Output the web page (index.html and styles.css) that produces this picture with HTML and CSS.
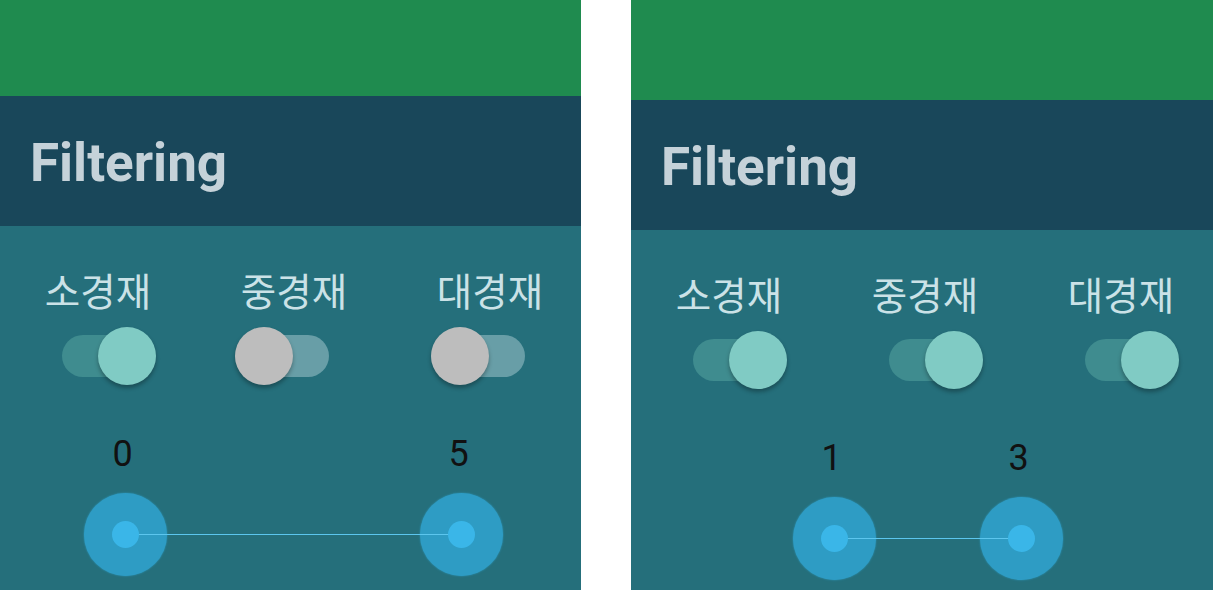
FILE: index.html
```html
<!DOCTYPE html>
<html lang="ko">
<head>
<meta charset="utf-8">
<title>Filtering</title>
<link rel="stylesheet" href="styles.css">
</head>
<body>
<div class="page">
  <section class="panel panel-a">
    <div class="appbar"></div>
    <header class="titlebar"><h1 class="title">Filtering</h1></header>
    <div class="content">
      <div class="toggles">
        <div class="col">
          <span class="label">소경재</span>
          <span class="switch on"><span class="track"></span><span class="thumb"></span></span>
        </div>
        <div class="col">
          <span class="label">중경재</span>
          <span class="switch off"><span class="track"></span><span class="thumb"></span></span>
        </div>
        <div class="col">
          <span class="label">대경재</span>
          <span class="switch off"><span class="track"></span><span class="thumb"></span></span>
        </div>
      </div>
      <div class="range">
        <div class="range-line" style="left:125px; width:336px;"></div>
        <div class="knob" style="left:125px;"><span class="value">0</span><span class="handle"><span class="dot"></span></span></div>
        <div class="knob" style="left:461px;"><span class="value">5</span><span class="handle"><span class="dot"></span></span></div>
      </div>
    </div>
  </section>
  <section class="panel panel-b">
    <div class="appbar"></div>
    <header class="titlebar"><h1 class="title">Filtering</h1></header>
    <div class="content">
      <div class="toggles">
        <div class="col">
          <span class="label">소경재</span>
          <span class="switch on"><span class="track"></span><span class="thumb"></span></span>
        </div>
        <div class="col">
          <span class="label">중경재</span>
          <span class="switch on"><span class="track"></span><span class="thumb"></span></span>
        </div>
        <div class="col">
          <span class="label">대경재</span>
          <span class="switch on"><span class="track"></span><span class="thumb"></span></span>
        </div>
      </div>
      <div class="range">
        <div class="range-line" style="left:203px; width:187px;"></div>
        <div class="knob" style="left:203px;"><span class="value">1</span><span class="handle"><span class="dot"></span></span></div>
        <div class="knob" style="left:390px;"><span class="value">3</span><span class="handle"><span class="dot"></span></span></div>
      </div>
    </div>
  </section>
</div>
</body>
</html>
```
FILE: styles.css
```css
* { box-sizing: border-box; }

html, body {
  margin: 0;
  padding: 0;
  background: #ffffff;
}

body {
  font-family: Roboto, "Noto Sans CJK KR", sans-serif;
}

.page {
  display: flex;
  gap: 50px;
  width: 1213px;
  height: 590px;
  overflow: hidden;
}

.panel {
  display: flex;
  flex-direction: column;
  height: 590px;
  background: #256f7b;
  overflow: hidden;
}

.panel-a { width: 581px; }
.panel-b { width: 582px; }

.appbar {
  background: #1f8b4f;
  height: 96px;
  flex: none;
}

.panel-b .appbar { height: 100px; }

.titlebar {
  background: #19475a;
  height: 130px;
  flex: none;
  padding: 41px 0 0 30px;
}

.title {
  margin: 0;
  font-family: Roboto, sans-serif;
  font-weight: 700;
  font-size: 53px;
  line-height: 53px;
  color: #c5d2d9;
  letter-spacing: 0;
}

.content {
  flex: 1;
  padding-top: 44px;
}

.toggles {
  display: grid;
  grid-template-columns: repeat(3, 196px);
}

.col {
  display: flex;
  flex-direction: column;
}

.label {
  font-family: "Noto Sans CJK KR", sans-serif;
  font-size: 38.5px;
  line-height: 38px;
  color: #cbe2e7;
  text-align: center;
}

.switch {
  display: grid;
  width: 94px;
  height: 58px;
  margin-top: 19px;
  margin-left: 62px;
}

.switch.off { margin-left: 39px; }

.track,
.thumb {
  grid-area: 1 / 1;
}

.track {
  align-self: center;
  height: 42px;
  border-radius: 21px;
  background: #3f8c8f;
}

.thumb {
  width: 58px;
  height: 58px;
  border-radius: 50%;
  background: #80cbc4;
  box-shadow: 0 3px 4px rgba(0, 0, 0, 0.3);
  justify-self: end;
}

.switch.off .track { background: #689ea7; }

.switch.off .thumb {
  background: #bdbdbd;
  justify-self: start;
}

.range {
  position: relative;
  margin-top: 51px;
  height: 120px;
}

.knob {
  position: absolute;
  top: 0;
  width: 83px;
  margin-left: -41.5px;
  display: flex;
  flex-direction: column;
  align-items: center;
}

.value {
  font-family: Roboto, sans-serif;
  font-size: 36px;
  line-height: 36px;
  color: #111111;
  padding-right: 5px;
}

.handle {
  display: flex;
  align-items: center;
  justify-content: center;
  width: 83px;
  height: 83px;
  margin-top: 21px;
  border-radius: 50%;
  background: #2e9cc4;
  box-shadow: 0 0 2px #2e9cc4;
}

.dot {
  position: relative;
  z-index: 2;
  width: 27px;
  height: 27px;
  border-radius: 50%;
  background: #3ab6e8;
}

.range-line {
  position: absolute;
  top: 98px;
  height: 1px;
  background: #5cc6ee;
  z-index: 1;
}
```
